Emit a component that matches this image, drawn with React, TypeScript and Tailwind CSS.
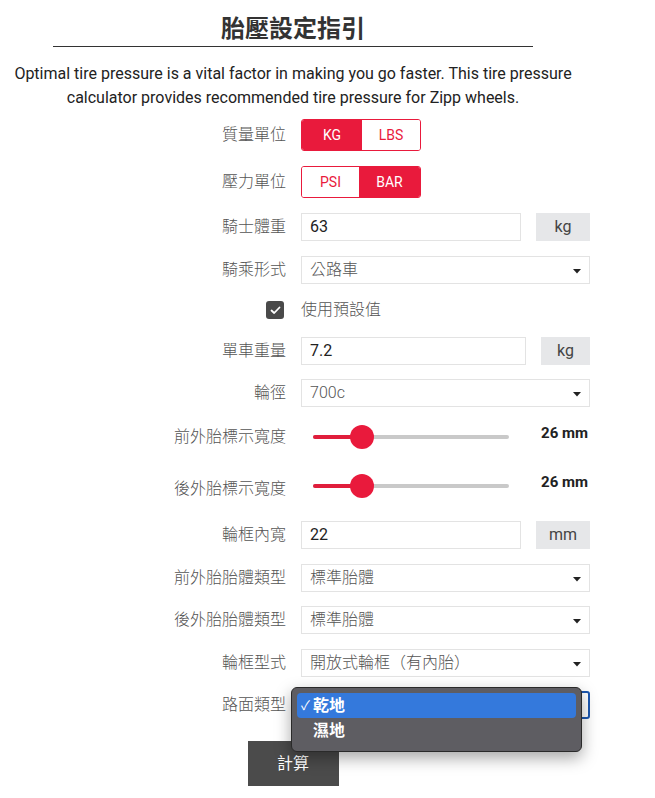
import React from "react";

const cjk = { fontFamily: 'Roboto, "Noto Sans CJK TC", sans-serif' };

function Label({ children, className = "" }: { children: React.ReactNode; className?: string }) {
  return (
    <div className={"w-[286px] shrink-0 text-right text-[16px] font-light text-[#555] " + className}>{children}</div>
  );
}

function Arrow() {
  return (
    <svg width="8" height="5" viewBox="0 0 8 5" className="absolute right-[8px] top-[12px]">
      <path d="M0 0 L8 0 L4 4.5 Z" fill="#222" />
    </svg>
  );
}

function Select({ value, focused = false }: { value: string; focused?: boolean }) {
  return (
    <div
      className={
        "relative ml-[15px] h-[28px] w-[289px] shrink-0 bg-white pl-[8px] text-[16px] font-light leading-[26px] text-[#555] " +
        (focused ? "rounded-[3px] border-2 border-[#1d58b0]" : "border border-[#e3e3e3]")
      }
    >
      {value}
      <Arrow />
    </div>
  );
}

function Input({ value, w, addon, aw }: { value: string; w: string; addon: string; aw: string }) {
  return (
    <div className="ml-[15px] flex w-[289px] shrink-0">
      <div className={"h-[28px] shrink-0 border border-[#e3e3e3] pl-[8px] text-[16px] leading-[26px] text-[#222] " + w}>{value}</div>
      <div className={"ml-auto flex h-[28px] shrink-0 items-center justify-center bg-[#e6e7e9] text-[16px] text-[#444] " + aw}>
        {addon}
      </div>
    </div>
  );
}

function Toggle({ a, b, aw, bw, active }: { a: string; b: string; aw: string; bw: string; active: 0 | 1 }) {
  const on = "bg-[#e91a3c] text-white";
  const off = "bg-white text-[#e91a3c]";
  return (
    <div className="ml-[15px] flex h-[32px] shrink-0 overflow-hidden rounded-[3px] border border-[#e91a3c] text-[14px]">
      <div className={"flex items-center justify-center " + aw + " " + (active === 0 ? on : off)}>{a}</div>
      <div className={"flex items-center justify-center " + bw + " " + (active === 1 ? on : off)}>{b}</div>
    </div>
  );
}

function Slider({ pct }: { pct: number }) {
  return (
    <div className="relative ml-[27px] h-[24px] w-[196px] shrink-0">
      <div className="absolute left-0 right-0 top-[10px] h-[4px] rounded-full bg-[#c9c9c9]" />
      <div className="absolute left-0 top-[10px] h-[4px] rounded-full bg-[#e01e3c]" style={{ width: pct + "px" }} />
      <div
        className="absolute top-0 h-[24px] w-[24px] rounded-full bg-[#e91a3c]"
        style={{ left: pct - 12 + "px" }}
      />
    </div>
  );
}

export default function App() {
  return (
    <div className="w-[655px] bg-white" style={cjk}>
      <div className="w-[586px]">
        <h1 className="pt-[9px] text-center text-[24px] font-bold leading-[36px] text-[#333]" style={{ fontFamily: '"Noto Sans CJK TC", sans-serif' }}>
          胎壓設定指引
        </h1>
        <div className="mx-auto mt-[1px] h-px w-[480px] bg-[#333]" />
        <p className="mt-[15px] text-center text-[16px] leading-[24px] text-[#222]">
          Optimal tire pressure is a vital factor in making you go faster. This tire pressure calculator provides
          recommended tire pressure for Zipp wheels.
        </p>
      </div>

      <div className="mt-[9px] flex items-center">
        <Label>質量單位</Label>
        <Toggle a="KG" b="LBS" aw="w-[60px]" bw="w-[58px]" active={0} />
      </div>
      <div className="mt-[15px] flex items-center">
        <Label>壓力單位</Label>
        <Toggle a="PSI" b="BAR" aw="w-[57px]" bw="w-[61px]" active={1} />
      </div>
      <div className="mt-[15px] flex items-center">
        <Label>騎士體重</Label>
        <Input value="63" w="w-[220px]" addon="kg" aw="w-[54px]" />
      </div>
      <div className="mt-[15px] flex items-center">
        <Label>騎乘形式</Label>
        <Select value="公路車" />
      </div>
      <div className="mt-[15px] flex h-[22px] items-center">
        <div className="flex w-[286px] shrink-0 justify-end pr-[2px]">
          <div className="flex h-[18px] w-[18px] items-center justify-center rounded-[3px] bg-[#4a4a4a]">
            <svg width="11" height="9" viewBox="0 0 11 9">
              <path d="M1.5 4.5 L4.2 7 L9.5 1.5" stroke="white" strokeWidth="1.8" fill="none" strokeLinecap="round" strokeLinejoin="round" />
            </svg>
          </div>
        </div>
        <div className="ml-[15px] text-[16px] font-light text-[#555]">使用預設值</div>
      </div>
      <div className="mt-[16px] flex items-center">
        <Label>單車重量</Label>
        <Input value="7.2" w="w-[225px]" addon="kg" aw="w-[49px]" />
      </div>
      <div className="mt-[14px] flex items-center">
        <Label>輪徑</Label>
        <Select value="700c" />
      </div>
      <div className="mt-[18px] flex h-[24px] w-[590px] items-center">
        <Label>前外胎標示寬度</Label>
        <Slider pct={49} />
        <div className="ml-auto mr-[2px] mt-[-8px] text-[15px] font-bold text-[#222]">26 mm</div>
      </div>
      <div className="mt-[25px] flex h-[24px] w-[590px] items-center">
        <Label className="mt-[6px]">後外胎標示寬度</Label>
        <Slider pct={49} />
        <div className="ml-auto mr-[2px] mt-[-8px] text-[15px] font-bold text-[#222]">26 mm</div>
      </div>
      <div className="mt-[23px] flex items-center">
        <Label>輪框內寬</Label>
        <Input value="22" w="w-[220px]" addon="mm" aw="w-[54px]" />
      </div>
      <div className="mt-[15px] flex items-center">
        <Label>前外胎胎體類型</Label>
        <Select value="標準胎體" />
      </div>
      <div className="mt-[14px] flex items-center">
        <Label>後外胎胎體類型</Label>
        <Select value="標準胎體" />
      </div>
      <div className="mt-[15px] flex items-center">
        <Label>輪框型式</Label>
        <Select value="開放式輪框（有內胎）" />
      </div>
      <div className="relative mt-[14px] flex items-center">
        <Label>路面類型</Label>
        <Select value="" focused />
        <div className="absolute left-[291px] top-[-4px] z-10 h-[65px] w-[291px] rounded-[6px] border border-[#2a2a2a] bg-[#5e5d62] p-[5px] shadow-[0_6px_16px_rgba(0,0,0,0.35)]">
          <div className="flex h-[25px] items-center rounded-[4px] bg-[#3479dc] pl-[4px] text-[16px] font-semibold text-white">
            <span className="w-[12px] text-[13px] font-normal">✓</span>
            <span>乾地</span>
          </div>
          <div className="flex h-[26px] items-center pl-[16px] text-[16px] font-semibold text-white">濕地</div>
        </div>
      </div>
      <div className="w-[586px]">
        <div className="mt-[22px] flex justify-center">
          <div className="flex h-[45px] w-[91px] items-center justify-center bg-[#4b4b4b] text-[16px] text-white">計算</div>
        </div>
      </div>
    </div>
  );
}
